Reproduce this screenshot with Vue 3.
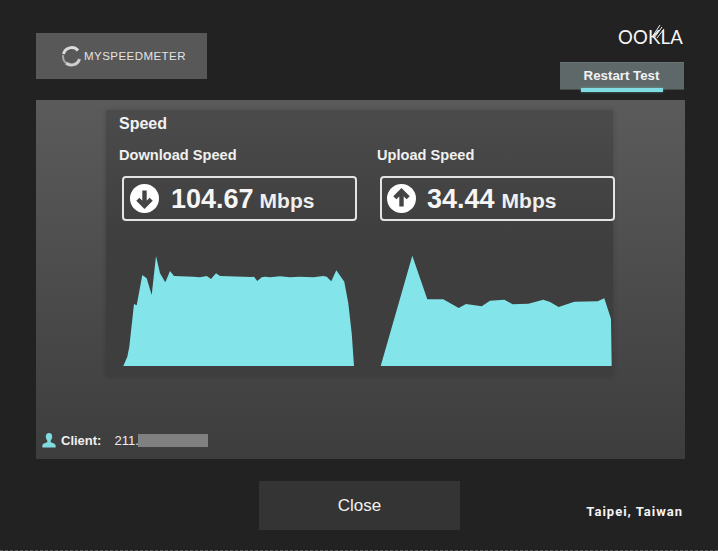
<template>
  <div class="page">
    <header class="top">
      <div class="brand">
        <svg class="brand-mark" width="21" height="21" viewBox="0 0 21 21">
          <path d="M2.500 8A8.400 8.400 0 0 1 17 4.500" fill="none" stroke="#dcdcdc" stroke-width="3" />
          <path d="M18.500 13A8.400 8.400 0 0 1 5 17" fill="none" stroke="#cfcfcf" stroke-width="3" />
          <path d="M2.200 9A8.400 8.400 0 0 0 5 17" fill="none" stroke="#a8a8a8" stroke-width="2" />
        </svg>
        <span class="brand-name">MYSPEEDMETER</span>
      </div>
      <div class="top-right">
        <span class="ookla">OOKLA
          <svg class="ookla-k" width="14" height="20" viewBox="0 0 14 20">
            <path d="M1 13L9 1M3.500 13.500L11 3M6 14L13 5" fill="none" stroke="#f2f2f2" stroke-width="1" />
          </svg>
        </span>
        <button class="restart" type="button">Restart Test</button>
      </div>
    </header>

    <main class="panel">
      <section class="card">
        <h2 class="card-title">Speed</h2>
        <div class="columns">
          <div v-for="m in meters" :key="m.label" class="meter">
            <div class="meter-label">{{ m.label }}</div>
            <div class="readout">
              <svg class="arrow" width="29" height="29" viewBox="0 0 29 29">
                <circle cx="14.5" cy="14.5" r="14.5" fill="#fff" />
                <path :d="m.arrow" fill="none" stroke="#454545" stroke-width="4.4" />
              </svg>
              <span class="value">{{ m.value }}</span>
              <span class="unit">Mbps</span>
            </div>
            <svg class="chart" width="232" height="126" viewBox="0 0 232 126">
              <polygon :points="m.points" fill="#83e5ea" />
            </svg>
          </div>
        </div>
      </section>
      <div class="client">
        <svg width="14" height="15" viewBox="0 0 14 15">
          <path d="M7 0C4.900 0 3.800 1.500 3.800 3.500C3.800 5.200 4.500 6.600 5.300 7.400L5.300 9.200C3.400 10 .6 10.400 .4 12.400L.3 14.500L13.700 14.500L13.600 12.400C13.400 10.400 10.600 10 8.700 9.200L8.700 7.400C9.500 6.600 10.200 5.200 10.200 3.500C10.200 1.500 9.100 0 7 0Z" fill="#83dbe2" />
        </svg>
        <span class="client-label">Client:</span>
        <span class="client-ip">211.</span>
        <span class="redacted"></span>
      </div>
    </main>

    <footer class="bottom">
      <button class="close" type="button">Close</button>
      <span class="location">Taipei, Taiwan</span>
    </footer>
  </div>
</template>

<script setup>
// chart outlines, measured off the original graphs
const meters = [
  {
    label: "Download Speed",
    value: "104.67",
    arrow: "M14.5 6.500V22M7.800 15.200L14.500 21.800L21.200 15.200",
    points:
      "1.300,126 5.300,116.700 7.300,106.700 12,64 14.700,65.300 20.300,35 24.700,38.300 29.700,55 34,16 38,33.300 43.300,42.300 48,31 52,36 71.300,36.700 78,37.300 84.700,36 89,39 94,33.300 98,36 129.700,37 132,36.700 135.300,41 139.700,37.300 143,36.700 148,37.300 158,36.300 168,37.300 178,36.700 191.300,37.300 201.300,36 204.700,36.700 209.300,41.300 214.300,30.300 222.300,41.700 226.300,63.300 229.700,93.300 232,126",
  },
  {
    label: "Upload Speed",
    value: "34.44",
    arrow: "M14.500 22.500V7M7.800 13.800L14.500 7.200L21.200 13.800",
    points:
      "0.700,126 32.300,15.700 47.300,59.300 63.300,59.300 78.700,68 86,64 101.700,66.300 110,60.700 124.300,59.700 132.700,64.300 148.300,63.700 163.300,59.700 170,62 178.700,67 194.300,61.700 217.700,61.300 224.300,58.300 231,79 231.700,126",
  },
];
</script>

<style>
html,
body {
  margin: 0;
  background: #222;
}
</style>

<style scoped>
.page {
  width: 718px;
  height: 551px;
  box-sizing: border-box;
  padding: 0 33px 0 36px;
  background: #222;
  border-bottom: 1px dashed #5c5c5c;
  color: #fff;
  font-family: "Liberation Sans", Arial, sans-serif;
  overflow: hidden;
}

.top {
  height: 100px;
  display: flex;
  justify-content: space-between;
  align-items: flex-start;
}

.brand {
  width: 171px;
  height: 46px;
  margin-top: 33px;
  background: #585858;
  display: flex;
  align-items: center;
  gap: 2px;
  padding-left: 25px;
  box-sizing: border-box;
}

.brand-name {
  font-size: 11.5px;
  letter-spacing: 0.45px;
  color: #e4e4e4;
  white-space: nowrap;
}

.top-right {
  display: flex;
  flex-direction: column;
  align-items: flex-end;
  width: 125px;
}

.ookla {
  position: relative;
  margin-top: 25px;
  height: 24px;
  line-height: 24px;
  margin-right: 2px;
  font-family: Lato, sans-serif;
  font-weight: 400;
  font-size: 18.5px;
  letter-spacing: 0.2px;
  color: #f8f8f8;
}

.ookla-k {
  position: absolute;
  left: 33px;
  top: -1px;
}

.restart {
  position: relative;
  width: 124px;
  height: 28px;
  margin: 13px 1px 0 0;
  padding: 0 1px 1px 0;
  border: 0;
  border-top: 1px solid #6a7676;
  border-bottom: 1px solid #454b4b;
  background: #5e6868;
  color: #f2f2f2;
  font-family: inherit;
  font-size: 13.3px;
  font-weight: 700;
}

.restart::after {
  content: "";
  position: absolute;
  left: 21px;
  right: 21px;
  bottom: -3px;
  height: 4px;
  background: #7fdde3;
  box-shadow: 0 0 3px rgba(127, 221, 227, 0.45);
}

.panel {
  position: relative;
  width: 649px;
  height: 359px;
  background: linear-gradient(#5b5b5b, #3d3d3d);
  padding: 10px 0 0 70px;
  box-sizing: border-box;
}

.card {
  width: 507px;
  height: 266px;
  box-sizing: border-box;
  padding: 4px 0 0 13px;
  background: linear-gradient(#4b4b4b, #3e3e3e 50%);
  box-shadow: 0 0 5px rgba(0, 0, 0, 0.18);
}

.card-title {
  margin: 0;
  font-size: 16px;
  line-height: 19px;
  font-weight: 700;
  color: #f2f2f2;
}

.columns {
  display: flex;
  margin-top: 14px;
}

.meter {
  flex: none;
  width: 258px;
}

.meter-label {
  font-size: 14.6px;
  line-height: 17px;
  font-weight: 700;
  color: #f0f0f0;
}

.readout {
  width: 235px;
  height: 45px;
  box-sizing: border-box;
  margin: 12px 0 0 3px;
  border: 2px solid #e4e4e4;
  border-radius: 4px;
  display: flex;
  align-items: center;
  padding-left: 6px;
}

.meter + .meter .readout {
  padding-left: 5px;
}

.arrow {
  flex: none;
}

.value {
  margin-left: 12px;
  font-size: 27px;
  line-height: 34px;
  color: #f6f6f6;
  font-weight: 700;
}

.meter + .meter .value {
  margin-left: 11px;
}

.unit {
  margin-left: 6px;
  padding-top: 5px;
  font-size: 21px;
  font-weight: 700;
  color: #efefef;
}

.meter + .meter .unit {
  margin-left: 7px;
}

.chart {
  display: block;
  margin: 19px 0 0 3px;
}

.client {
  position: absolute;
  left: 6px;
  top: 333px;
  display: flex;
  align-items: center;
  height: 15px;
  font-size: 13px;
}

.client-label {
  margin-left: 5px;
  font-weight: 700;
  color: #f0f0f0;
}

.client-ip {
  margin-left: 13px;
  color: #eee;
}

.redacted {
  width: 70px;
  height: 13px;
  margin-left: -1px;
  background: #808080;
}

.bottom {
  position: relative;
  display: flex;
  justify-content: center;
  padding-top: 22px;
}

.close {
  width: 201px;
  height: 49px;
  margin-right: 2px;
  border: 0;
  background: #343434;
  color: #f2f2f2;
  font-family: inherit;
  font-size: 17px;
}

.location {
  position: absolute;
  right: 2px;
  top: 45px;
  font-family: Roboto, sans-serif;
  font-size: 13px;
  font-weight: 700;
  letter-spacing: 1px;
  color: #f4f4f4;
}
</style>
